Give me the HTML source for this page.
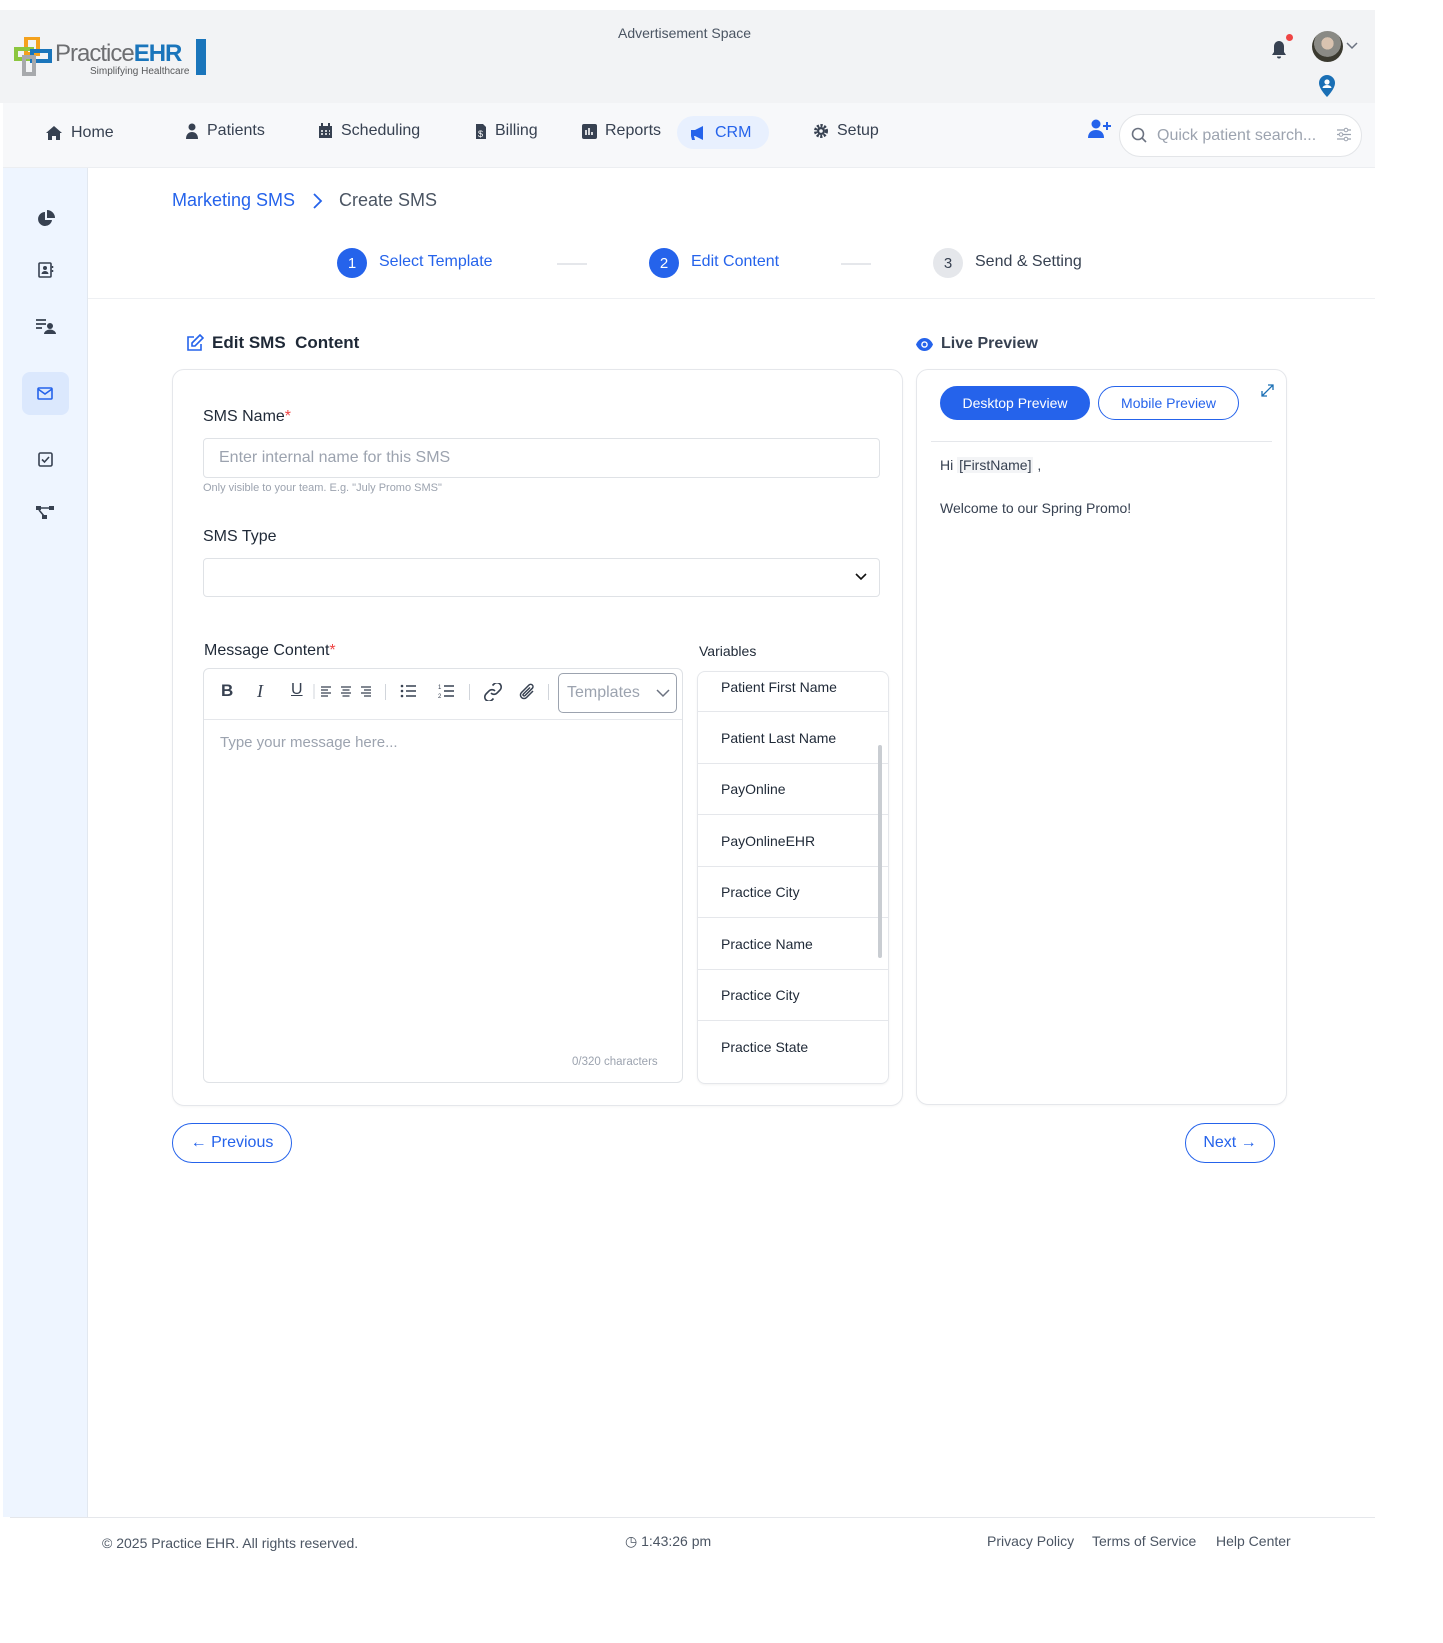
<!DOCTYPE html>
<html><head><meta charset="utf-8">
<style>
*{box-sizing:border-box;margin:0;padding:0}
body{width:1443px;height:1643px;position:relative;background:#fff;font-family:"Liberation Sans",sans-serif;color:#1f2937;overflow:hidden}
.a{position:absolute}
.hdr{left:0;top:10px;width:1375px;height:93px;background:#f2f3f5}
.nav{left:3px;top:103px;width:1372px;height:65px;background:#f7f8fa;border-bottom:1px solid #eceef1}
.ni{top:120px;font-size:16px;color:#374151;display:flex;align-items:center;gap:8px;height:22px}
.side{left:3px;top:168px;width:85px;height:1349px;background:#eef5ff;border-right:1px solid #e2e8f0}
.card{border:1px solid #e5e7eb;border-radius:12px;background:#fff;box-shadow:0 1px 2px rgba(0,0,0,.04)}
.lbl{font-size:16px;color:#1f2937}
.inp{border:1px solid #dfe2e6;border-radius:4px;background:#fff}
.var{left:697px;width:191px;border-bottom:1px solid #e5e7eb;font-size:14px;color:#1f2937;padding-left:24px;display:flex;align-items:center}
.circ{width:30px;height:30px;border-radius:50%;display:flex;align-items:center;justify-content:center;font-size:15px}
.btn{border:1px solid #2563eb;border-radius:20px;color:#2563eb;font-size:16px;display:flex;align-items:center;justify-content:center;gap:6px}
</style></head><body>
<div class="a hdr"></div>
<svg class="a" style="left:14px;top:37px" width="40" height="40" viewBox="0 0 40 40">
<rect x="12" y="1" width="12" height="16" fill="none" stroke="#f4a11d" stroke-width="4"/>
<rect x="2" y="12" width="16" height="10" fill="none" stroke="#8cc63f" stroke-width="4"/>
<rect x="18" y="14" width="18" height="10" fill="none" stroke="#1a75bb" stroke-width="4"/>
<rect x="10" y="20" width="10" height="17" fill="none" stroke="#a7a9ac" stroke-width="4"/>
</svg>
<div class="a" style="left:55px;top:40px;font-size:24px;color:#6d6e71;letter-spacing:-1px">Practice<span style="color:#1a75bb;font-weight:bold">EHR</span></div>
<div class="a" style="left:196px;top:39px;width:10px;height:36px;background:#1a75bb"></div>
<div class="a" style="left:90px;top:66px;font-size:10px;color:#58595b">Simplifying Healthcare</div>
<div class="a" style="left:618px;top:25px;font-size:14px;color:#4b5563">Advertisement Space</div>
<svg class="a" style="left:1270px;top:40px" width="18" height="20" viewBox="0 0 18 20"><path d="M9 1c-3 0-5 2.5-5 5.5V12l-2 3h14l-2-3V6.5C14 3.5 12 1 9 1z M7 16.5a2 2 0 0 0 4 0z" fill="#374151"/></svg>
<div class="a" style="left:1286px;top:34px;width:7px;height:7px;border-radius:50%;background:#ef4444"></div>
<div class="a" style="left:1312px;top:31px;width:31px;height:31px;border-radius:50%;background:radial-gradient(circle at 50% 40%,#d9c3b0 0 25%,#8a8a85 26% 55%,#3b3a30 56%)"></div>
<svg class="a" style="left:1346px;top:42px" width="12" height="8"><path d="M1 1l5 5 5-5" stroke="#6b7280" fill="none" stroke-width="1.5"/></svg>
<svg class="a" style="left:1317px;top:74px" width="20" height="24" viewBox="0 0 20 24"><path d="M10 1a8 8 0 0 0-8 8c0 6 8 14 8 14s8-8 8-14a8 8 0 0 0-8-8z" fill="#1a6fb5"/><circle cx="10" cy="8" r="2.6" fill="#fff"/><path d="M5.5 14a4.5 3 0 0 1 9 0z" fill="#fff"/></svg>

<div class="a nav"></div>
<div class="a ni" style="left:45px;top:122px"><svg width="18" height="16" viewBox="0 0 18 16"><path d="M9 1L1 8h2v7h4v-4h4v4h4V8h2z" fill="#374151"/></svg>Home</div>
<div class="a ni" style="left:185px"><svg width="14" height="18" viewBox="0 0 14 18"><circle cx="7" cy="5" r="3.5" fill="#374151"/><path d="M1 17c0-5 3-7 6-7s6 2 6 7z" fill="#374151"/></svg>Patients</div>
<div class="a ni" style="left:318px"><svg width="15" height="16" viewBox="0 0 15 16"><rect x="1" y="3" width="13" height="12" fill="#374151"/><rect x="3" y="0" width="2" height="4" fill="#374151"/><rect x="10" y="0" width="2" height="4" fill="#374151"/><path d="M3 8h2M7 8h2M11 8h1M3 11h2M7 11h2M11 11h1" stroke="#fff" stroke-width="1.5"/></svg>Scheduling</div>
<div class="a ni" style="left:475px"><svg width="12" height="17" viewBox="0 0 12 17"><path d="M1 1h7l3 3v12H1z" fill="#374151"/><text x="3" y="14" font-size="9" fill="#fff" font-family="Liberation Sans">$</text></svg>Billing</div>
<div class="a ni" style="left:582px"><svg width="15" height="15" viewBox="0 0 15 15"><rect width="15" height="15" rx="2" fill="#374151"/><path d="M4 11V6M7 11V4M10 11V8" stroke="#fff" stroke-width="1.6"/></svg>Reports</div>
<div class="a" style="left:677px;top:116px;width:92px;height:33px;border-radius:17px;background:#e8f0fe"></div>
<div class="a ni" style="left:689px;top:122px;color:#2563eb"><svg width="18" height="16" viewBox="0 0 18 16"><path d="M2 5h4l8-4v14L6 11H5l1 4H3l-1-4z" fill="#2563eb"/></svg>CRM</div>
<div class="a ni" style="left:813px"><svg width="16" height="16" viewBox="0 0 16 16"><circle cx="8" cy="8" r="5.5" fill="none" stroke="#374151" stroke-width="3" stroke-dasharray="2.2 1.4"/><circle cx="8" cy="8" r="4" fill="#374151"/><circle cx="8" cy="8" r="1.8" fill="#f7f8fa"/></svg>Setup</div>
<svg class="a" style="left:1088px;top:119px" width="24" height="20" viewBox="0 0 24 20"><circle cx="8" cy="5" r="4.5" fill="#2563eb"/><path d="M0 19c0-6 4-8 8-8s8 2 8 8z" fill="#2563eb"/><path d="M19 3v8M15 7h8" stroke="#2563eb" stroke-width="2"/></svg>
<div class="a" style="left:1119px;top:114px;width:243px;height:43px;border:1px solid #e3e5e8;border-radius:22px;background:#fff"></div>
<svg class="a" style="left:1131px;top:127px" width="16" height="17"><circle cx="7" cy="7" r="5.5" stroke="#6b7280" stroke-width="1.6" fill="none"/><path d="M11 11l4 4" stroke="#6b7280" stroke-width="1.6"/></svg>
<div class="a" style="left:1157px;top:127px;font-size:16px;color:#9ca3af">Quick patient search...</div>
<svg class="a" style="left:1336px;top:127px" width="16" height="15"><path d="M1 3h14M1 7.5h14M1 12h14" stroke="#9ca3af" stroke-width="1.2"/><circle cx="10" cy="3" r="1.8" fill="#fff" stroke="#9ca3af"/><circle cx="5" cy="7.5" r="1.8" fill="#fff" stroke="#9ca3af"/><circle cx="10" cy="12" r="1.8" fill="#fff" stroke="#9ca3af"/></svg>

<div class="a side"></div>
<svg class="a" style="left:37px;top:210px" width="18" height="18" viewBox="0 0 18 18"><path d="M8 2a7 7 0 1 0 7 8H8z" fill="#374151"/><path d="M10 0v8h8a8 8 0 0 0-8-8z" fill="#374151"/></svg>
<svg class="a" style="left:38px;top:262px" width="16" height="16" viewBox="0 0 16 16"><rect x="1" y="1" width="12" height="14" rx="1" fill="none" stroke="#374151" stroke-width="1.6"/><circle cx="7" cy="6" r="2" fill="#374151"/><path d="M3.5 12a3.5 3 0 0 1 7 0z" fill="#374151"/><path d="M14.5 4v2M14.5 8v2" stroke="#374151" stroke-width="1.5"/></svg>
<svg class="a" style="left:36px;top:318px" width="20" height="16" viewBox="0 0 20 16"><path d="M0 2h10M0 6h10M0 10h6" stroke="#374151" stroke-width="1.8"/><circle cx="14" cy="8" r="3" fill="#374151"/><path d="M8 16a6 4.5 0 0 1 12 0z" fill="#374151"/></svg>
<div class="a" style="left:22px;top:372px;width:47px;height:43px;border-radius:8px;background:#dbe8fd"></div>
<svg class="a" style="left:37px;top:387px" width="16" height="13"><rect x="1" y="1" width="14" height="11" rx="1" fill="none" stroke="#2563eb" stroke-width="1.6"/><path d="M1 2l7 5 7-5" stroke="#2563eb" fill="none" stroke-width="1.6"/></svg>
<svg class="a" style="left:38px;top:452px" width="15" height="15"><rect x="1" y="1" width="13" height="13" rx="1.5" fill="none" stroke="#374151" stroke-width="1.6"/><path d="M4 7.5l2.5 2.5L11 5" stroke="#374151" fill="none" stroke-width="1.6"/></svg>
<svg class="a" style="left:36px;top:505px" width="18" height="15"><rect x="0" y="1" width="5" height="4" fill="#374151"/><rect x="13" y="1" width="5" height="4" fill="#374151"/><rect x="6" y="10" width="5" height="4" fill="#374151"/><path d="M5 3h8M3 5l5 6" stroke="#374151" stroke-width="1.6"/></svg>

<div class="a" style="left:172px;top:190px;font-size:18px;color:#2563eb">Marketing SMS</div>
<svg class="a" style="left:312px;top:192px" width="12" height="18"><path d="M2 2l7 7-7 7" stroke="#2563eb" fill="none" stroke-width="1.8"/></svg>
<div class="a" style="left:339px;top:190px;font-size:18px;color:#4b5563">Create SMS</div>
<div class="a circ" style="left:337px;top:248px;background:#2563eb;color:#fff">1</div>
<div class="a" style="left:379px;top:253px;font-size:16px;color:#2563eb">Select Template</div>
<div class="a" style="left:557px;top:263px;width:30px;height:2px;background:#e5e7eb"></div>
<div class="a circ" style="left:649px;top:248px;background:#2563eb;color:#fff">2</div>
<div class="a" style="left:691px;top:253px;font-size:16px;color:#2563eb">Edit Content</div>
<div class="a" style="left:841px;top:263px;width:30px;height:2px;background:#e5e7eb"></div>
<div class="a circ" style="left:933px;top:248px;background:#e5e7eb;color:#374151">3</div>
<div class="a" style="left:975px;top:253px;font-size:16px;color:#374151">Send &amp; Setting</div>
<div class="a" style="left:88px;top:298px;width:1287px;height:1px;background:#eef0f3"></div>

<svg class="a" style="left:186px;top:334px" width="18" height="18" viewBox="0 0 18 18"><path d="M8 3H2v13h13v-6" stroke="#2563eb" fill="none" stroke-width="1.6"/><path d="M14 1l3 3-8 8H6V9z" stroke="#2563eb" fill="none" stroke-width="1.6"/></svg>
<div class="a" style="left:212px;top:333px;font-size:17px;font-weight:bold;color:#1f2937">Edit SMS&nbsp; Content</div>
<div class="a card" style="left:172px;top:369px;width:731px;height:737px"></div>
<div class="a lbl" style="left:203px;top:408px">SMS Name<span style="color:#ef4444">*</span></div>
<div class="a inp" style="left:203px;top:438px;width:677px;height:40px"></div>
<div class="a" style="left:219px;top:449px;font-size:16px;color:#9ca3af">Enter internal name for this SMS</div>
<div class="a" style="left:203px;top:482px;font-size:11px;color:#9ca3af">Only visible to your team. E.g. "July Promo SMS"</div>
<div class="a lbl" style="left:203px;top:528px">SMS Type</div>
<div class="a inp" style="left:203px;top:558px;width:677px;height:39px"></div>
<svg class="a" style="left:855px;top:573px" width="12" height="8"><path d="M1 1l5 5 5-5" stroke="#111" fill="none" stroke-width="1.6"/></svg>
<div class="a lbl" style="left:204px;top:642px">Message Content<span style="color:#ef4444">*</span></div>
<div class="a" style="left:699px;top:643px;font-size:14px;color:#1f2937">Variables</div>
<div class="a inp" style="left:203px;top:668px;width:480px;height:415px;border-radius:6px"></div>
<div class="a" style="left:204px;top:719px;width:478px;height:1px;background:#e5e7eb"></div>
<div class="a" style="left:221px;top:681px;font-size:17px;color:#374151;font-weight:bold">B</div>
<div class="a" style="left:257px;top:681px;font-size:18px;color:#374151;font-style:italic;font-family:'Liberation Serif',serif">I</div>
<div class="a" style="left:291px;top:681px;font-size:16px;color:#374151;text-decoration:underline">U</div>
<svg class="a" style="left:313px;top:684px" width="62" height="16"><path d="M1 0v15" stroke="#d1d5db"/><path d="M8 3h10M8 6h7M8 9h10M8 12h7M28 3h10M29.5 6h7M28 9h10M29.5 12h7M48 3h10M51 6h7M48 9h10M51 12h7" stroke="#374151" stroke-width="1.2"/></svg>
<div class="a" style="left:385px;top:684px;width:1px;height:16px;background:#d1d5db"></div>
<svg class="a" style="left:400px;top:684px" width="18" height="14"><circle cx="2" cy="2" r="1.3" fill="#374151"/><circle cx="2" cy="7" r="1.3" fill="#374151"/><circle cx="2" cy="12" r="1.3" fill="#374151"/><path d="M6 2h10M6 7h10M6 12h10" stroke="#374151" stroke-width="1.4"/></svg>
<svg class="a" style="left:438px;top:683px" width="18" height="16"><text x="0" y="6" font-size="6" fill="#374151">1</text><text x="0" y="15" font-size="6" fill="#374151">2</text><path d="M6 3h10M6 8h10M6 13h10" stroke="#374151" stroke-width="1.4"/></svg>
<div class="a" style="left:469px;top:684px;width:1px;height:16px;background:#d1d5db"></div>
<svg class="a" style="left:483px;top:683px" width="20" height="18" viewBox="0 0 20 18"><path d="M8 10a4 4 0 0 0 6 0l3-3a4 4 0 0 0-6-6l-1.5 1.5M12 8a4 4 0 0 0-6 0l-3 3a4 4 0 0 0 6 6l1.5-1.5" stroke="#374151" fill="none" stroke-width="1.6"/></svg>
<svg class="a" style="left:518px;top:683px" width="18" height="18" viewBox="0 0 18 18"><path d="M15 8l-6.5 6.5a3.5 3.5 0 0 1-5-5L11 2a2.3 2.3 0 0 1 3.3 3.3L7 12.6a1 1 0 0 1-1.6-1.6L12 4.5" stroke="#374151" fill="none" stroke-width="1.5"/></svg>
<div class="a" style="left:548px;top:684px;width:1px;height:16px;background:#d1d5db"></div>
<div class="a" style="left:558px;top:673px;width:119px;height:40px;border:1px solid #9ca3af;border-radius:5px"></div>
<div class="a" style="left:567px;top:684px;font-size:16px;color:#9ca3af">Templates</div>
<svg class="a" style="left:656px;top:689px" width="14" height="9"><path d="M1 1l6 6 6-6" stroke="#6b7280" fill="none" stroke-width="1.5"/></svg>
<div class="a" style="left:220px;top:734px;font-size:15px;color:#9ca3af">Type your message here...</div>
<div class="a" style="left:572px;top:1056px;font-size:11.5px;color:#9ca3af">0/320 characters</div>

<div class="a" style="left:697px;top:671px;width:192px;height:413px;border:1px solid #e5e7eb;border-radius:8px;box-shadow:0 1px 2px rgba(0,0,0,.05)"></div>
<div class="a var" style="top:672px;height:40px;align-items:flex-start;padding-top:7px">Patient First Name</div>
<div class="a var" style="top:712px;height:52px">Patient Last Name</div>
<div class="a var" style="top:764px;height:51px">PayOnline</div>
<div class="a var" style="top:815px;height:52px">PayOnlineEHR</div>
<div class="a var" style="top:867px;height:51px">Practice City</div>
<div class="a var" style="top:918px;height:52px">Practice Name</div>
<div class="a var" style="top:970px;height:51px">Practice City</div>
<div class="a var" style="top:1021px;height:52px;border-bottom:none">Practice State</div>
<div class="a" style="left:878px;top:745px;width:4px;height:213px;background:#c9cdd2;border-radius:2px"></div>

<svg class="a" style="left:915px;top:337px" width="19" height="15" viewBox="0 0 19 15"><path d="M1 7.5C3 3 6 1 9.5 1S16 3 18 7.5C16 12 13 14 9.5 14S3 12 1 7.5z" fill="#2563eb"/><circle cx="9.5" cy="7.5" r="3.3" fill="#fff"/><circle cx="9.5" cy="7.5" r="1.9" fill="#2563eb"/></svg>
<div class="a" style="left:941px;top:335px;font-size:16px;font-weight:bold;color:#374151">Live Preview</div>
<div class="a card" style="left:916px;top:369px;width:371px;height:736px"></div>
<div class="a btn" style="left:940px;top:386px;width:150px;height:34px;background:#2563eb;color:#fff;font-size:14px">Desktop Preview</div>
<div class="a btn" style="left:1098px;top:386px;width:141px;height:34px;font-size:14px">Mobile Preview</div>
<svg class="a" style="left:1261px;top:384px" width="13" height="13"><path d="M1 12L12 1M7 1h5v5M1 7v5h5" stroke="#1a6fb5" fill="none" stroke-width="1.3"/></svg>
<div class="a" style="left:931px;top:441px;width:341px;height:1px;background:#e5e7eb"></div>
<div class="a" style="left:940px;top:457px;font-size:14px;color:#374151">Hi <span style="background:#f3f4f6;padding:0 2px">[FirstName]</span> ,</div>
<div class="a" style="left:940px;top:500px;font-size:14px;color:#374151">Welcome to our Spring Promo!</div>

<div class="a btn" style="left:172px;top:1123px;width:120px;height:40px">&#8592; Previous</div>
<div class="a btn" style="left:1185px;top:1123px;width:90px;height:40px">Next &#8594;</div>

<div class="a" style="left:10px;top:1517px;width:1365px;height:51px;background:#fff;border-top:1px solid #e5e7eb"></div>
<div class="a" style="left:102px;top:1535px;font-size:14px;color:#4b5563">© 2025 Practice EHR. All rights reserved.</div>
<div class="a" style="left:625px;top:1533px;font-size:14px;color:#4b5563">&#9719; 1:43:26 pm</div>
<div class="a" style="left:987px;top:1533px;font-size:14px;color:#4b5563">Privacy Policy</div>
<div class="a" style="left:1092px;top:1533px;font-size:14px;color:#4b5563">Terms of Service</div>
<div class="a" style="left:1216px;top:1533px;font-size:14px;color:#4b5563">Help Center</div>
</body></html>
